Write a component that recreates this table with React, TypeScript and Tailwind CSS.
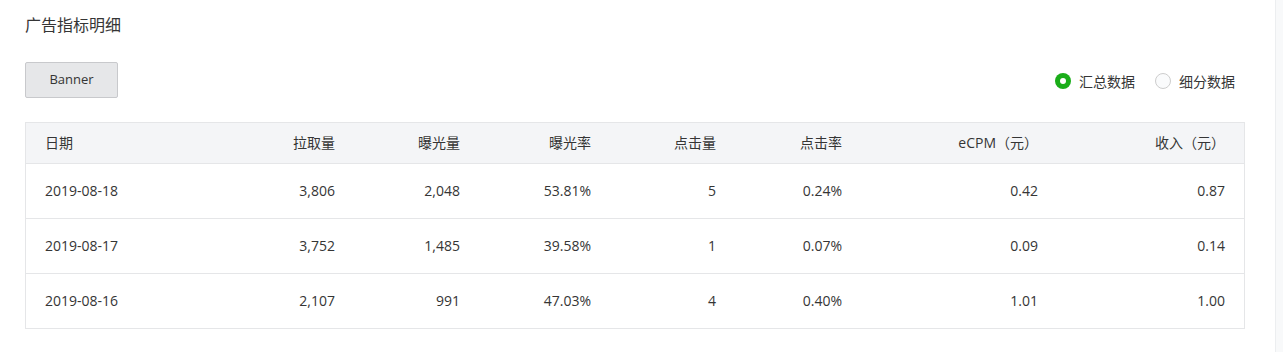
import React from "react";

const headers = ["日期", "拉取量", "曝光量", "曝光率", "点击量", "点击率", "eCPM（元）", "收入（元）"];
const rows = [
  ["2019-08-18", "3,806", "2,048", "53.81%", "5", "0.24%", "0.42", "0.87"],
  ["2019-08-17", "3,752", "1,485", "39.58%", "1", "0.07%", "0.09", "0.14"],
  ["2019-08-16", "2,107", "991", "47.03%", "4", "0.40%", "1.01", "1.00"],
];

const cols = "grid grid-cols-[200px_128px_125px_131px_125px_126px_196px_187px]";

export default function App() {
  return (
    <div
      className="flex w-[1283px] h-[352px] bg-white text-[#353535]"
      style={{ fontFamily: '"Open Sans", "Noto Sans CJK SC", sans-serif' }}
    >
      <div className="w-[1275px] px-[25px] pt-[13px]">
        <div className="text-[16px] leading-[24px]">广告指标明细</div>
        <div className="mt-[25px] flex items-center justify-between w-[1220px]">
          <button className="h-[36px] w-[93px] rounded-[2px] border border-[#c8c9cc] bg-[#e6e7e9] text-[13px] text-[#353535]">
            Banner
          </button>
          <div className="flex items-center pr-[10px] pt-[2px] text-[14px]">
            <div className="flex items-center gap-[8px]">
              <span className="flex h-4 w-4 items-center justify-center rounded-full bg-[#1aad19]">
                <span className="h-[6px] w-[6px] rounded-full bg-white" />
              </span>
              <span>汇总数据</span>
            </div>
            <div className="ml-[20px] flex items-center gap-[8px]">
              <span className="h-4 w-4 rounded-full border border-[#cdcdcd] bg-[#fafbfc]" />
              <span>细分数据</span>
            </div>
          </div>
        </div>
        <div className="mt-[24px] w-[1220px] border border-[#e5e6e8] text-sm">
          <div className={`${cols} h-[40px] items-center bg-[#f4f5f7]`}>
            {headers.map((h, i) => (
              <div key={i} className={`px-[19px] ${i === 0 ? "text-left" : "text-right"}`}>
                {h}
              </div>
            ))}
          </div>
          {rows.map((r, ri) => (
            <div key={ri} className={`${cols} h-[55px] items-center border-t border-[#e5e6e8]`}>
              {r.map((c, i) => (
                <div key={i} className={`px-[19px] ${i === 0 ? "text-left" : "text-right"}`}>
                  {c}
                </div>
              ))}
            </div>
          ))}
        </div>
      </div>
      <div className="w-[8px] h-full border-l border-[#eceef0] bg-[#f8f9fa]" />
    </div>
  );
}
